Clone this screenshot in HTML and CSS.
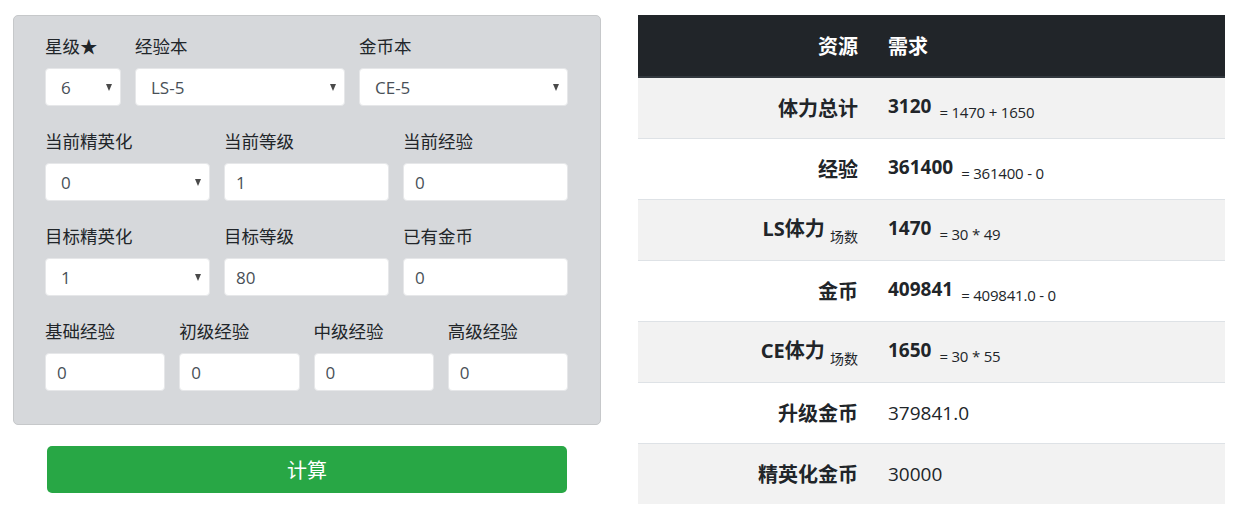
FILE: index.html
```html
<!DOCTYPE html>
<html lang="zh-CN">
<head>
<meta charset="utf-8">
<title>计算器</title>
<link rel="stylesheet" href="styles.css">
</head>
<body>
<div class="page">
  <div class="left">
    <form class="panel">
      <div class="row row-a">
        <div class="group">
          <label class="lbl">星级★</label>
          <div class="sel"><select><option>6</option></select></div>
        </div>
        <div class="group">
          <label class="lbl">经验本</label>
          <div class="sel"><select><option>LS-5</option></select></div>
        </div>
        <div class="group">
          <label class="lbl">金币本</label>
          <div class="sel"><select><option>CE-5</option></select></div>
        </div>
      </div>
      <div class="row row-b">
        <div class="group">
          <label class="lbl">当前精英化</label>
          <div class="sel"><select><option>0</option></select></div>
        </div>
        <div class="group">
          <label class="lbl">当前等级</label>
          <input class="inp" type="text" value="1">
        </div>
        <div class="group">
          <label class="lbl">当前经验</label>
          <input class="inp" type="text" value="0">
        </div>
      </div>
      <div class="row row-b">
        <div class="group">
          <label class="lbl">目标精英化</label>
          <div class="sel"><select><option>1</option></select></div>
        </div>
        <div class="group">
          <label class="lbl">目标等级</label>
          <input class="inp" type="text" value="80">
        </div>
        <div class="group">
          <label class="lbl">已有金币</label>
          <input class="inp" type="text" value="0">
        </div>
      </div>
      <div class="row row-c">
        <div class="group">
          <label class="lbl">基础经验</label>
          <input class="inp" type="text" value="0">
        </div>
        <div class="group">
          <label class="lbl">初级经验</label>
          <input class="inp" type="text" value="0">
        </div>
        <div class="group">
          <label class="lbl">中级经验</label>
          <input class="inp" type="text" value="0">
        </div>
        <div class="group">
          <label class="lbl">高级经验</label>
          <input class="inp" type="text" value="0">
        </div>
      </div>
    </form>
    <div class="btn-wrap"><button class="btn" type="button">计算</button></div>
  </div>
  <table class="res">
    <thead>
      <tr><th class="c1">资源</th><th class="c2">需求</th></tr>
    </thead>
    <tbody>
      <tr class="odd"><th class="c1">体力总计</th><td class="c2"><b>3120</b> <small class="sub">= 1470 + 1650</small></td></tr>
      <tr><th class="c1">经验</th><td class="c2"><b>361400</b> <small class="sub">= 361400 - 0</small></td></tr>
      <tr class="odd"><th class="c1">LS体力 <small class="unit">场数</small></th><td class="c2"><b>1470</b> <small class="sub">= 30 * 49</small></td></tr>
      <tr><th class="c1">金币</th><td class="c2"><b>409841</b> <small class="sub">= 409841.0 - 0</small></td></tr>
      <tr class="odd"><th class="c1">CE体力 <small class="unit">场数</small></th><td class="c2"><b>1650</b> <small class="sub">= 30 * 55</small></td></tr>
      <tr><th class="c1">升级金币</th><td class="c2">379841.0</td></tr>
      <tr class="odd"><th class="c1">精英化金币</th><td class="c2">30000</td></tr>
    </tbody>
  </table>
</div>
</body>
</html>
```

FILE: styles.css
```css
* { box-sizing: border-box; }

html, body {
  margin: 0;
  padding: 0;
  background: #ffffff;
}

body {
  font-family: "Open Sans", "Noto Sans CJK SC", sans-serif;
  color: #212529;
}

.page {
  display: flex;
  align-items: flex-start;
  gap: 37px;
  padding: 15px 0 0 13px;
}

.left {
  width: 588px;
  flex: none;
}

.panel {
  margin: 0;
  background: #d6d8db;
  border: 1px solid #c6c8ca;
  border-radius: 5px;
  padding: 16px 32px 12px 31px;
}

.row {
  display: grid;
  column-gap: 14px;
  margin-bottom: 21px;
}

.row-a { grid-template-columns: 76px 210px 209px; }
.row-b { grid-template-columns: 165px 165px 165px; }
.row-c { grid-template-columns: 1fr 1fr 1fr 1fr; }

.group {
  display: flex;
  flex-direction: column;
}

.lbl {
  font-family: "Noto Sans CJK SC", sans-serif;
  font-size: 17.5px;
  line-height: 27px;
  margin-bottom: 9px;
  color: #212529;
  white-space: nowrap;
}

.inp,
.sel select {
  width: 100%;
  height: 38px;
  border: 1px solid #e6e7e9;
  border-radius: 4px;
  background: #ffffff;
  color: #495057;
  font-family: "Open Sans", sans-serif;
  font-size: 17px;
  outline: none;
  margin: 0;
}

.inp {
  padding: 0 11px;
}

.sel {
  position: relative;
}

.sel select {
  -webkit-appearance: none;
  appearance: none;
  padding: 0 24px 0 15px;
}

.sel::after {
  content: "";
  position: absolute;
  right: 9px;
  top: 16px;
  border-left: 3.5px solid transparent;
  border-right: 3.5px solid transparent;
  border-top: 7px solid #4a4a4a;
  pointer-events: none;
}

.btn-wrap {
  padding: 21px 34px 0 34px;
}

.btn {
  display: block;
  width: 100%;
  height: 47px;
  border: none;
  border-radius: 5px;
  background: #28a745;
  color: #ffffff;
  font-family: "Noto Sans CJK SC", sans-serif;
  font-size: 20px;
  cursor: pointer;
}

.res {
  width: 587px;
  flex: none;
  border-collapse: collapse;
  font-size: 19px;
}

.res thead th {
  background: #212529;
  color: #ffffff;
  height: 62px;
  border-bottom: 2px solid #32383e;
  font-family: "Noto Sans CJK SC", sans-serif;
  font-weight: 700;
  font-size: 20px;
  padding: 0 15px;
  vertical-align: middle;
}

.res thead th.c1 { text-align: right; }
.res thead th.c2 { text-align: left; }

.res tbody tr {
  height: 61px;
  background: #ffffff;
}
.res tbody tr.odd { background: #f2f2f2; }

.res tbody th,
.res tbody td {
  border-top: 1px solid #dee2e6;
  padding: 0 15px;
  vertical-align: middle;
}

.c1 {
  width: 235px;
  text-align: right;
  font-family: "Noto Sans", "Noto Sans CJK SC", sans-serif;
  font-weight: 700;
  font-size: 20px;
  white-space: nowrap;
}

.c2 {
  text-align: left;
  font-family: "Open Sans", "Noto Sans CJK SC", sans-serif;
  font-size: 19px;
  color: #212529;
  white-space: nowrap;
}

.c2 b {
  font-weight: 700;
  margin-right: 3px;
}

.sub {
  font-size: 15px;
  font-weight: 400;
  vertical-align: -5px;
  font-family: "Open Sans", sans-serif;
  letter-spacing: -0.2px;
}

.unit {
  font-family: "Noto Sans CJK SC", sans-serif;
  font-size: 14px;
  font-weight: 400;
  vertical-align: -6px;
}
```
